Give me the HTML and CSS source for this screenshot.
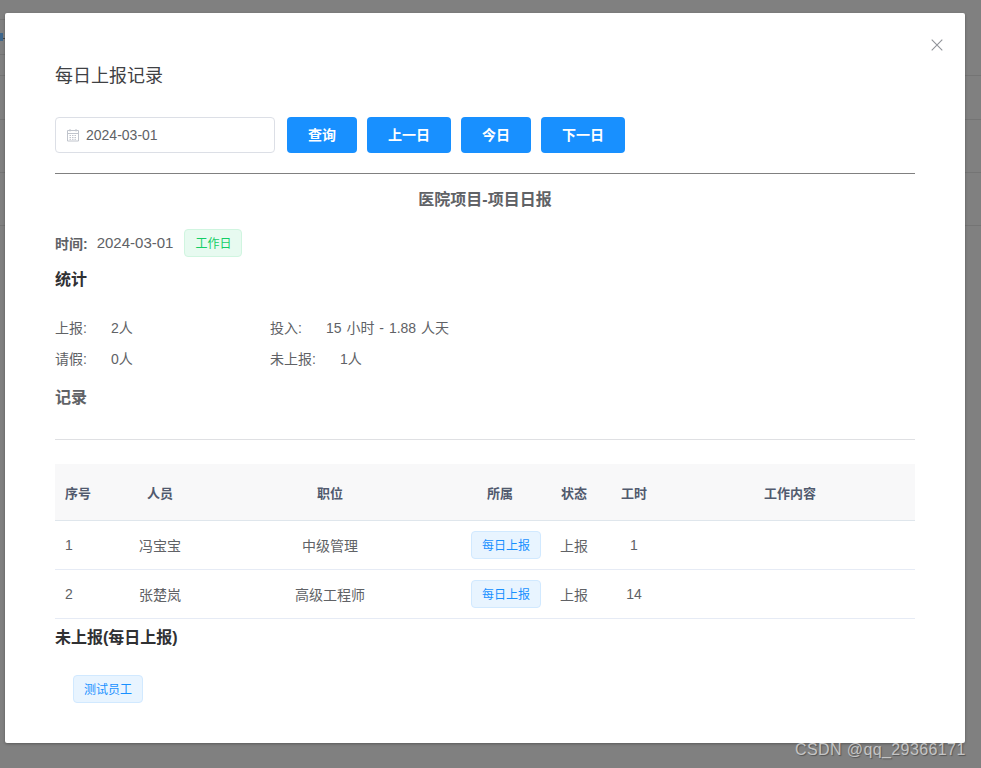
FILE: index.html
```html
<!DOCTYPE html>
<html lang="zh-CN">
<head>
<meta charset="utf-8">
<title>每日上报记录</title>
<link rel="stylesheet" href="styles.css">
</head>
<body>
<div class="backdrop">
  <div class="bg-row r1"></div>
  <div class="bg-row r2"><span class="bg-link"></span><span class="bg-dash"></span></div>
  <div class="bg-row r3"></div>
  <div class="bg-row r4"></div>
  <div class="bg-row r5"></div>
  <div class="bg-row r6"></div>
</div>
<section class="modal">
  <svg class="close" width="12" height="12" viewBox="0 0 12 12"><path d="M.7.7l10.6 10.6M11.3.7L.7 11.3" stroke="#909399" stroke-width="1.1" fill="none"/></svg>
  <h2 class="modal-title">每日上报记录</h2>
  <div class="toolbar">
    <div class="date-input">
      <svg class="cal" width="14" height="14" viewBox="0 0 14 14"><path d="M1.5 2.5h11v10.5h-11zM1.5 5.5h11M4 1v2.5M10 1v2.5" stroke="#c0c4cc" fill="none"/><path d="M3.5 7.5h7M3.5 9.5h7M3.5 11.3h7" stroke="#c0c4cc" stroke-dasharray="1.5 1"/></svg>
      <span>2024-03-01</span>
    </div>
    <button class="btn w70">查询</button>
    <button class="btn w84">上一日</button>
    <button class="btn w70">今日</button>
    <button class="btn w84">下一日</button>
  </div>
  <hr class="rule-dark">
  <h3 class="report-title">医院项目-项目日报</h3>
  <div class="time-row">
    <strong>时间:</strong><span class="time-val">2024-03-01</span><span class="tag tag-green">工作日</span>
  </div>
  <h4 class="sec sec-stat">统计</h4>
  <div class="stats">
    <div class="stat s1"><span class="k">上报:</span><span>2人</span></div>
    <div class="stat"><span class="k">投入:</span><span class="spaced">15 小时 - 1.88 人天</span></div>
    <div class="stat s1"><span class="k">请假:</span><span>0人</span></div>
    <div class="stat"><span class="k k2">未上报:</span><span>1人</span></div>
  </div>
  <h4 class="sec sec-rec">记录</h4>
  <hr class="rule-light">
  <table class="grid">
    <colgroup><col class="c1"><col class="c2"><col class="c3"><col class="c4"><col class="c5"><col class="c6"><col class="c7"></colgroup>
    <thead>
      <tr><th class="left">序号</th><th>人员</th><th>职位</th><th>所属</th><th>状态</th><th>工时</th><th>工作内容</th></tr>
    </thead>
    <tbody>
      <tr><td class="left">1</td><td>冯宝宝</td><td>中级管理</td><td><span class="tag cell-tag">每日上报</span></td><td>上报</td><td>1</td><td></td></tr>
      <tr><td class="left">2</td><td>张楚岚</td><td>高级工程师</td><td><span class="tag cell-tag">每日上报</span></td><td>上报</td><td>14</td><td></td></tr>
    </tbody>
  </table>
  <h4 class="sec sec-miss">未上报(每日上报)</h4>
  <div class="missing"><span class="tag">测试员工</span></div>
</section>
<div class="watermark">CSDN @qq_29366171</div>
</body>
</html>
```

FILE: styles.css
```css
* { box-sizing: border-box; }
html, body { margin: 0; height: 100%; }
body {
  width: 981px;
  height: 768px;
  overflow: hidden;
  position: relative;
  background: #808080;
  font-family: "Liberation Sans", "Noto Sans CJK SC", sans-serif;
  font-size: 14px;
  color: #606266;
}
.backdrop { display: flex; flex-direction: column; }
.bg-row { border-bottom: 1px solid #747474; }
.r1 { height: 20px; width: 20px; }
.r2 { height: 35px; width: 20px; display: flex; align-items: flex-start; padding-top: 13px; }
.r3 { height: 21px; }
.r4 { height: 44px; }
.r5 { height: 53px; }
.r6 { height: 53px; }
.bg-link { width: 3px; height: 8px; background: #3f678c; }
.bg-dash { width: 2px; height: 1px; margin-top: 5px; background: #444; }

.modal {
  position: absolute;
  left: 5px;
  top: 13px;
  width: 960px;
  height: 730px;
  background: #fff;
  padding: 50px 50px 0;
  border-radius: 2px;
  box-shadow: 0 1px 3px rgba(0, 0, 0, .3);
}
.close { position: absolute; top: 26px; right: 22px; }
.modal-title {
  margin: 1px 0 0;
  font-size: 18px;
  font-weight: 400;
  line-height: 24px;
  color: #3f4144;
}
.toolbar { display: flex; gap: 10px; margin-top: 29px; }
.date-input {
  width: 220px;
  height: 36px;
  margin-right: 2px;
  border: 1px solid #dcdfe6;
  border-radius: 4px;
  display: flex;
  align-items: center;
  padding-left: 10px;
  color: #606266;
}
.cal { margin-right: 6px; }
.btn {
  height: 36px;
  border: 0;
  border-radius: 4px;
  background: #1890ff;
  color: #fff;
  font: inherit;
  font-weight: 700;
  padding: 0 0 2px;
}
.w70 { width: 70px; }
.w84 { width: 84px; }
.rule-dark { border: 0; border-top: 1px solid #808080; margin: 20px 0 0; }
.report-title {
  margin: 14px 0 0;
  text-align: center;
  font-size: 16px;
  line-height: 24px;
  font-weight: 700;
  color: #606266;
}
.time-row { display: flex; align-items: center; margin-top: 17px; height: 28px; }
.time-row strong { font-weight: 700; padding-bottom: 1px; }
.time-val { margin-left: 9px; font-size: 15px; padding-bottom: 1px; }
.tag {
  display: inline-block;
  height: 28px;
  line-height: 28px;
  padding: 0 10px;
  font-size: 12px;
  color: #1890ff;
  background: #e8f4ff;
  border: 1px solid #d1e9ff;
  border-radius: 4px;
  white-space: nowrap;
}
.tag-green { margin-left: 11px; color: #13ce66; background: #e7faf0; border-color: #d0f5e0; }
.sec { margin: 0; font-size: 16px; line-height: 24px; font-weight: 700; color: #303133; }
.sec-stat { margin-top: 11px; }
.stats {
  display: grid;
  grid-template-columns: 215px 1fr;
  grid-auto-rows: 31px;
  margin-top: 21px;
  line-height: 31px;
}
.stat { display: flex; }
.k { width: 56px; }
.k2 { width: 70px; }
.spaced { word-spacing: 1px; }
.sec-rec { margin-top: 11px; color: #606266; }
.rule-light { border: 0; border-top: 1px solid #dfe0e3; margin: 29px 0 0; }
.grid {
  width: 860px;
  margin-top: 24px;
  border-collapse: collapse;
  table-layout: fixed;
}
.c1 { width: 60px; }
.c2 { width: 90px; }
.c3 { width: 250px; }
.c4 { width: 90px; }
.c5 { width: 58px; }
.c6 { width: 62px; }
.c7 { width: 250px; }
th, td { padding: 0; text-align: center; border-bottom: 1px solid #e6ebf5; }
th {
  height: 56px;
  padding-top: 2px;
  background: #f8f8f9;
  color: #515a6e;
  font-size: 13px;
  font-weight: 700;
  border-bottom-color: #dfe6ec;
}
td { height: 49px; }
.left { text-align: left; padding-left: 10px; }
.cell-tag { vertical-align: middle; margin-left: 12px; }
.sec-miss { margin-top: 7px; }
.missing { margin-top: 25px; padding-left: 18px; }
.watermark {
  position: absolute;
  left: 795px;
  top: 740px;
  font-size: 16px;
  line-height: 20px;
  color: #c4c4c4;
  text-shadow: 1px 1px 1px #555;
  letter-spacing: 0.4px;
}
```
